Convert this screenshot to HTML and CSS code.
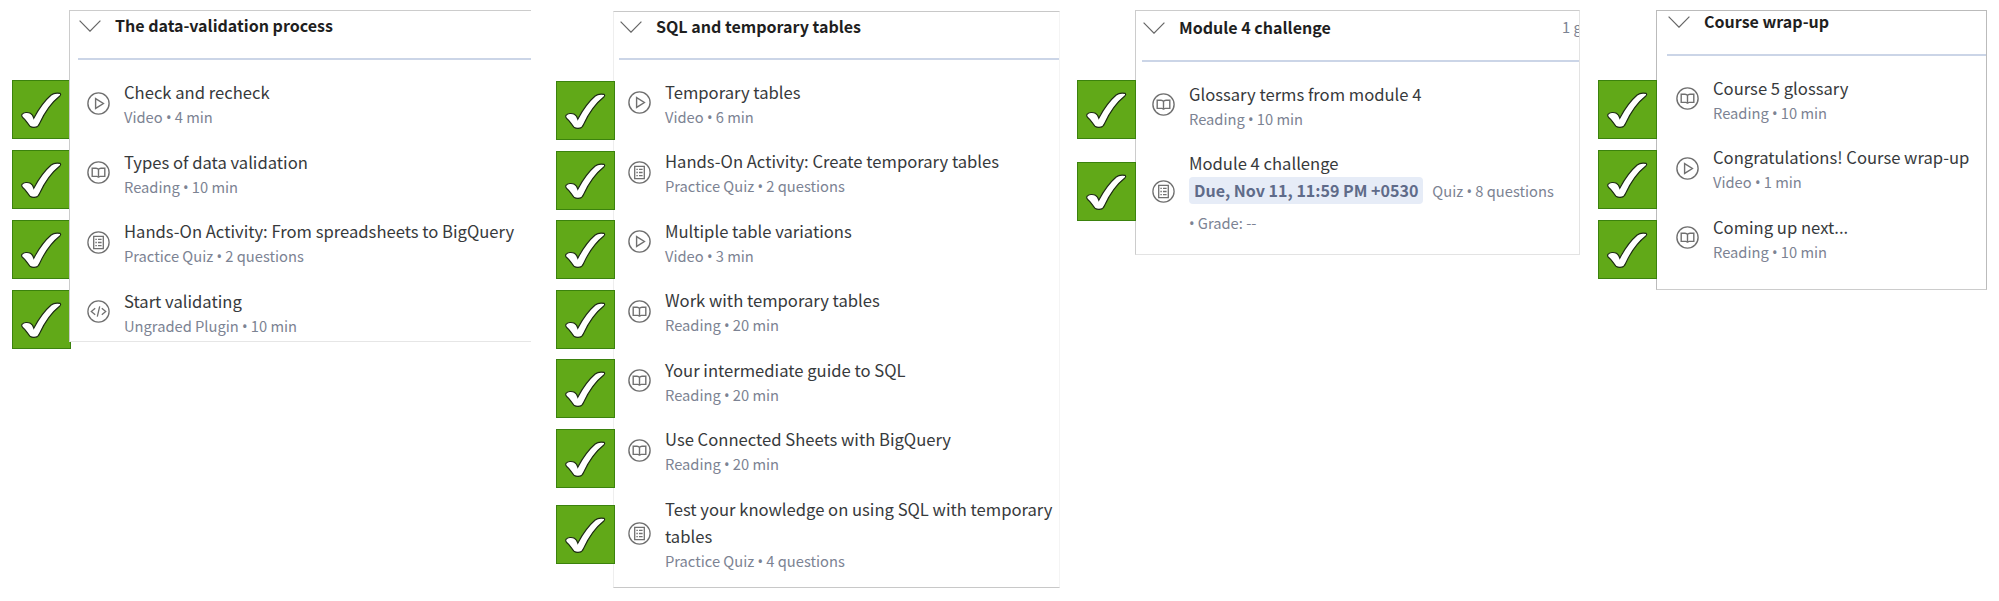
FILE: index.html
```
<!DOCTYPE html>
<html lang="en">
<head>
<meta charset="utf-8">
<title>Course progress</title>
<link rel="stylesheet" href="styles.css">
</head>
<body>
<svg class="defs" width="0" height="0">
  <symbol id="chevron" viewBox="0 0 22 12"><path d="M.6.6 11 11.2 21.4.6" fill="none" stroke="#666" stroke-width="1.2"/></symbol>
  <symbol id="check" viewBox="0 0 59 59"><path d="M9.3 34.5C11 32.3 15.500 32 18 33.500Q20.500 35 21.500 38.500C27 28 32.500 20.500 39.500 14.500C42 12.400 46 12.300 48.800 12.800Q50 13.800 48.500 15.500C39 23 32.500 33 27.500 44Q26 47.500 23.500 47.800Q20 48.400 17.500 46.800C14.500 43 13.500 40.500 10 37.800Q8.300 36.500 9.300 34.500Z" fill="#fff" stroke="#1c2b12" stroke-width="1.200"/></symbol>
  <symbol id="video" viewBox="0 0 23 23"><g fill="none" stroke="#707070" stroke-width="1.400"><circle cx="11.500" cy="11.500" r="10.600"/><path d="M8.600 6.600 16.400 11.500 8.600 16.400Z"/></g></symbol>
  <symbol id="reading" viewBox="0 0 23 23"><g fill="none" stroke="#707070" stroke-width="1.400"><circle cx="11.500" cy="11.500" r="10.600"/><path d="M11.500 8.500Q10.800 7.200 9 7.200H5.200V15.400H9.800Q11.200 15.400 11.500 16.600Q11.800 15.400 13.200 15.400H17.800V7.200H14Q12.200 7.200 11.500 8.500V16.600"/></g></symbol>
  <symbol id="quiz" viewBox="0 0 23 23"><g fill="none" stroke="#707070" stroke-width="1.300"><circle cx="11.500" cy="11.500" r="10.600"/><path d="M6.700 5.300H16.300V17.700H6.700Z"/><path d="M8.400 8.400h1.400M8.400 11.500h1.400M8.400 14.600h1.400M11 8.400h3.600M11 11.500h3.600M11 14.600h3.600"/></g></symbol>
  <symbol id="code" viewBox="0 0 23 23"><g fill="none" stroke="#707070" stroke-width="1.300"><circle cx="11.500" cy="11.500" r="10.600"/><path d="M8.200 8.200 4.300 11.500 8.200 14.800M14.800 8.200 18.700 11.500 14.800 14.800M12.700 6.300 10.300 16.700"/></g></symbol>
</svg>
<main class="board">
  <section class="group group-validation">
    <div class="ticks">
      <svg class="tick"><use href="#check"/></svg>
      <svg class="tick"><use href="#check"/></svg>
      <svg class="tick"><use href="#check"/></svg>
      <svg class="tick"><use href="#check"/></svg>
    </div>
    <div class="panel">
      <header class="head"><svg class="chev"><use href="#chevron"/></svg><h2>The data-validation process</h2></header>
      <ul class="list">
        <li><svg class="icon"><use href="#video"/></svg><div><p class="name">Check and recheck</p><p class="meta">Video <span class="dot">•</span> 4 min</p></div></li>
        <li><svg class="icon"><use href="#reading"/></svg><div><p class="name">Types of data validation</p><p class="meta">Reading <span class="dot">•</span> 10 min</p></div></li>
        <li><svg class="icon"><use href="#quiz"/></svg><div><p class="name">Hands-On Activity: From spreadsheets to BigQuery</p><p class="meta">Practice Quiz <span class="dot">•</span> 2 questions</p></div></li>
        <li><svg class="icon"><use href="#code"/></svg><div><p class="name">Start validating</p><p class="meta">Ungraded Plugin <span class="dot">•</span> 10 min</p></div></li>
      </ul>
    </div>
  </section>
  <section class="group group-sql">
    <div class="ticks">
      <svg class="tick"><use href="#check"/></svg>
      <svg class="tick"><use href="#check"/></svg>
      <svg class="tick"><use href="#check"/></svg>
      <svg class="tick"><use href="#check"/></svg>
      <svg class="tick"><use href="#check"/></svg>
      <svg class="tick"><use href="#check"/></svg>
      <svg class="tick tick-last"><use href="#check"/></svg>
    </div>
    <div class="panel">
      <header class="head"><svg class="chev"><use href="#chevron"/></svg><h2>SQL and temporary tables</h2></header>
      <ul class="list">
        <li><svg class="icon"><use href="#video"/></svg><div><p class="name">Temporary tables</p><p class="meta">Video <span class="dot">•</span> 6 min</p></div></li>
        <li><svg class="icon"><use href="#quiz"/></svg><div><p class="name">Hands-On Activity: Create temporary tables</p><p class="meta">Practice Quiz <span class="dot">•</span> 2 questions</p></div></li>
        <li><svg class="icon"><use href="#video"/></svg><div><p class="name">Multiple table variations</p><p class="meta">Video <span class="dot">•</span> 3 min</p></div></li>
        <li><svg class="icon"><use href="#reading"/></svg><div><p class="name">Work with temporary tables</p><p class="meta">Reading <span class="dot">•</span> 20 min</p></div></li>
        <li><svg class="icon"><use href="#reading"/></svg><div><p class="name">Your intermediate guide to SQL</p><p class="meta">Reading <span class="dot">•</span> 20 min</p></div></li>
        <li><svg class="icon"><use href="#reading"/></svg><div><p class="name">Use Connected Sheets with BigQuery</p><p class="meta">Reading <span class="dot">•</span> 20 min</p></div></li>
        <li><svg class="icon"><use href="#quiz"/></svg><div><p class="name">Test your knowledge on using SQL with temporary<br>tables</p><p class="meta">Practice Quiz <span class="dot">•</span> 4 questions</p></div></li>
      </ul>
    </div>
  </section>
  <section class="group group-challenge">
    <div class="ticks">
      <svg class="tick"><use href="#check"/></svg>
      <svg class="tick tick-last"><use href="#check"/></svg>
    </div>
    <div class="panel">
      <header class="head"><svg class="chev"><use href="#chevron"/></svg><h2>Module 4 challenge</h2><span class="graded">1 g</span></header>
      <ul class="list">
        <li><svg class="icon"><use href="#reading"/></svg><div><p class="name">Glossary terms from module 4</p><p class="meta">Reading <span class="dot">•</span> 10 min</p></div></li>
        <li><svg class="icon"><use href="#quiz"/></svg><div><p class="name">Module 4 challenge</p><div class="due-row"><span class="due">Due, Nov 11, 11:59 PM +0530</span><span class="meta">Quiz <span class="dot">•</span> 8 questions</span></div><p class="meta grade"><span class="dot">•</span> Grade: --</p></div></li>
      </ul>
    </div>
  </section>
  <section class="group group-wrap">
    <div class="ticks">
      <svg class="tick"><use href="#check"/></svg>
      <svg class="tick"><use href="#check"/></svg>
      <svg class="tick"><use href="#check"/></svg>
    </div>
    <div class="panel">
      <header class="head"><svg class="chev"><use href="#chevron"/></svg><h2>Course wrap-up</h2></header>
      <ul class="list">
        <li><svg class="icon"><use href="#reading"/></svg><div><p class="name">Course 5 glossary</p><p class="meta">Reading <span class="dot">•</span> 10 min</p></div></li>
        <li><svg class="icon"><use href="#video"/></svg><div><p class="name">Congratulations! Course wrap-up</p><p class="meta">Video <span class="dot">•</span> 1 min</p></div></li>
        <li><svg class="icon"><use href="#reading"/></svg><div><p class="name">Coming up next...</p><p class="meta">Reading <span class="dot">•</span> 10 min</p></div></li>
      </ul>
    </div>
  </section>
</main>
</body>
</html>
```
FILE: styles.css
```
* { box-sizing: border-box; }
body {
  margin: 0;
  background: #fff;
  font-family: "Noto Sans CJK SC", "Noto Sans", sans-serif;
  overflow: hidden;
}
h2, p, ul { margin: 0; padding: 0; }
.defs { display: block; height: 0; }
.board {
  display: flex;
  align-items: flex-start;
  width: 1999px;
  height: 601px;
  padding: 10px 0 0 12px;
}
.group { display: flex; align-items: flex-start; flex: none; }
.ticks {
  display: flex;
  flex-direction: column;
  gap: 11px;
  padding-top: 70px;
  margin-right: -1px;
  z-index: 1;
}
.tick {
  display: block;
  width: 59px;
  height: 59px;
  background: #61a918;
  border: 1px solid #3b820d;
}
.panel { background: #fff; border: 1px solid #ccc; overflow: hidden; }
.head {
  display: flex;
  align-items: center;
  height: 49px;
  margin-left: 8px;
  padding: 0 0 19px 1px;
  border-bottom: 2px solid #cbd5e7;
  white-space: nowrap;
}
.chev { width: 22px; height: 12px; margin: 2px 14px 0 0; flex: none; }
h2 { font-size: 16.050px; line-height: 26px; font-weight: 700; color: #1f1f1f; }
.list { list-style: none; padding: 17.500px 0 0 17px; }
.list li { display: flex; align-items: center; gap: 14px; padding-bottom: 18.800px; white-space: nowrap; }
.icon { width: 23px; height: 23px; flex: none; margin-top: 1px; }
.name { padding-top: 1.500px; font-size: 16.630px; line-height: 27.700px; color: #373a3c; }
.meta { font-size: 14.700px; line-height: 23px; color: #7c8393; }
.name + .meta { margin-top: -1.500px; }
.dot { font-family: "Noto Sans", sans-serif; line-height: 1; }

.group-validation .ticks { z-index: 0; margin-right: -2px; }
.group-validation .panel { width: 462px; height: 332px; z-index: 1; border-right: 0; border-bottom-color: #e6e6e6; }

.group-sql { margin-left: 25px; }
.group-sql .ticks { padding-top: 71px; gap: 10.500px; margin-right: -2px; }
.group-sql .tick-last { margin-top: 6.500px; }
.group-sql .panel { width: 447px; height: 577px; margin-top: 1px; border-color: #c8c8c8 #f4f4f4 #c8c8c8 #eee; }
.group-sql .head { height: 48px; margin-left: 5px; }
.group-sql .list { padding: 17px 0 0 14px; }

.group-challenge { margin-left: 17px; }
.group-challenge .tick-last { margin-top: 12px; }
.group-challenge .panel { width: 445px; height: 245px; border-color: #ccc #e3e3e3 #e3e3e3 #ccc; }
.group-challenge .head { height: 51px; margin-left: 6px; padding-bottom: 18px; }
.group-challenge .list { padding: 17px 0 0 16px; }
.graded { margin-left: auto; width: 17px; overflow: hidden; font-size: 14.700px; line-height: 26px; color: #7c8393; }
.due-row { display: flex; align-items: center; gap: 9px; height: 27px; margin-top: -1px; }
.due { padding: 0 5px; border-radius: 4px; background: #e6ecf7; font-size: 16.050px; line-height: 27px; font-weight: 700; color: #5f6b89; }
.grade { padding-top: 7px; }

.group-wrap { margin-left: 18px; }
.group-wrap .ticks { gap: 10.800px; }
.group-wrap .panel { width: 331px; height: 280px; border-color: #bbb #bbb #ccc #bbb; }
.group-wrap .head { height: 45px; margin-left: 10px; padding-bottom: 23px; }
.group-wrap .list { padding: 17px 0 0 19px; }
```
